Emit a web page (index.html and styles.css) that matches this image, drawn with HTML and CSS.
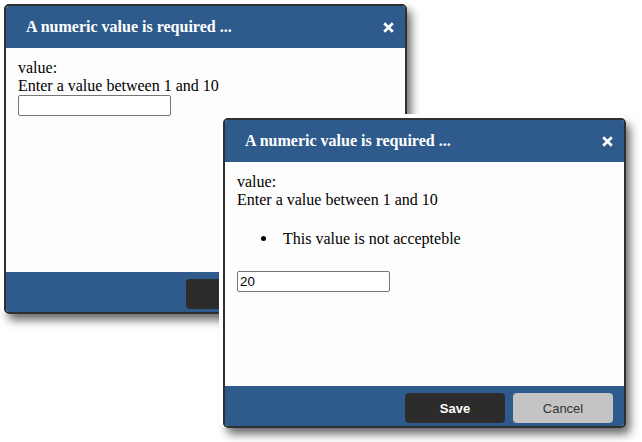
FILE: index.html
```html
<!DOCTYPE html>
<html>
<head>
<meta charset="utf-8">
<link rel="stylesheet" href="styles.css">
</head>
<body>
<div class="dialog dialog-first">
  <div class="dlg-header">
    <span class="dlg-title">A numeric value is required ...</span>
    <span class="dlg-close"><svg width="11" height="11" viewBox="0 0 11 11"><path d="M1.2 1.2 L9.8 9.8 M9.8 1.2 L1.2 9.8" stroke="#fff" stroke-width="2.7"/></svg></span>
  </div>
  <div class="dlg-body">
    <div class="line">value:</div>
    <div class="line">Enter a value between 1 and 10</div>
    <input class="num-input" type="text" value="">
  </div>
  <div class="dlg-footer">
    <button class="btn btn-save">Save</button>
    <button class="btn btn-cancel">Cancel</button>
  </div>
</div>

<div class="dialog dialog-second">
  <div class="dlg-header">
    <span class="dlg-title">A numeric value is required ...</span>
    <span class="dlg-close"><svg width="11" height="11" viewBox="0 0 11 11"><path d="M1.2 1.2 L9.8 9.8 M9.8 1.2 L1.2 9.8" stroke="#fff" stroke-width="2.7"/></svg></span>
  </div>
  <div class="dlg-body">
    <div class="line">value:</div>
    <div class="line">Enter a value between 1 and 10</div>
    <ul class="errors"><li>This value is not accepteble</li></ul>
    <input class="num-input" type="text" value="20">
  </div>
  <div class="dlg-footer">
    <button class="btn btn-save">Save</button>
    <button class="btn btn-cancel">Cancel</button>
  </div>
</div>
</body>
</html>
```
FILE: styles.css
```css
html, body {
  margin: 0;
  padding: 0;
  background: #ffffff;
}
body {
  position: relative;
  width: 642px;
  height: 442px;
  overflow: hidden;
  font-family: "Liberation Serif", "Times New Roman", serif;
  font-size: 16px;
  color: #000;
}
.dialog {
  position: absolute;
  box-sizing: border-box;
  width: 403px;
  height: 310px;
  border: 2px solid #2f2f2f;
  border-radius: 5px;
  background: #fdfdfd;
  box-shadow: -2px -2px 0 2px #ffffff, 4px 6px 10px rgba(0, 0, 0, 0.6);
  display: flex;
  flex-direction: column;
  overflow: hidden;
}
.dialog-first {
  left: 4px;
  top: 4px;
}
.dialog-second {
  left: 223px;
  top: 118px;
}
.dlg-header {
  height: 42px;
  flex: none;
  background: #2e5b8c;
  display: flex;
  align-items: center;
  justify-content: space-between;
  padding: 0 11px 0 20px;
}
.dlg-title {
  color: #fff;
  font-weight: bold;
  font-size: 16px;
}
.dlg-close {
  display: flex;
  width: 11px;
  height: 11px;
}
.dlg-body {
  flex: 1;
  padding: 11px 12px 0 12px;
}
.line {
  line-height: normal;
}
.num-input {
  display: block;
  box-sizing: border-box;
  width: 153px;
  height: 21px;
  margin: 0;
  padding: 1px 2px;
  border: 1px solid #767676;
  border-radius: 2px;
  background: #fff;
  font-family: "Liberation Sans", Arial, sans-serif;
  font-size: 13.33px;
  color: #000;
}
.dialog-second .num-input {
  margin-top: 1px;
}
.errors {
  margin: 21px 0 23px 0;
  padding-left: 46px;
  list-style: none;
}
.errors li::before {
  content: "";
  display: inline-block;
  width: 5px;
  height: 5px;
  border-radius: 50%;
  background: #000;
  margin-left: -22px;
  margin-right: 17px;
  vertical-align: 3px;
}
.dlg-footer {
  height: 40px;
  flex: none;
  background: #2e5b8c;
  display: flex;
  justify-content: flex-end;
  gap: 8px;
  padding: 7px 11px 0 0;
  box-sizing: border-box;
}
.btn {
  width: 100px;
  height: 30px;
  border: none;
  border-radius: 4px;
  font-family: "Liberation Sans", Arial, sans-serif;
  font-size: 13px;
  padding: 0;
}
.btn-save {
  background: #2c2c2c;
  color: #fff;
  font-weight: bold;
}
.btn-cancel {
  background: #c4c4c4;
  color: #333;
}
```
